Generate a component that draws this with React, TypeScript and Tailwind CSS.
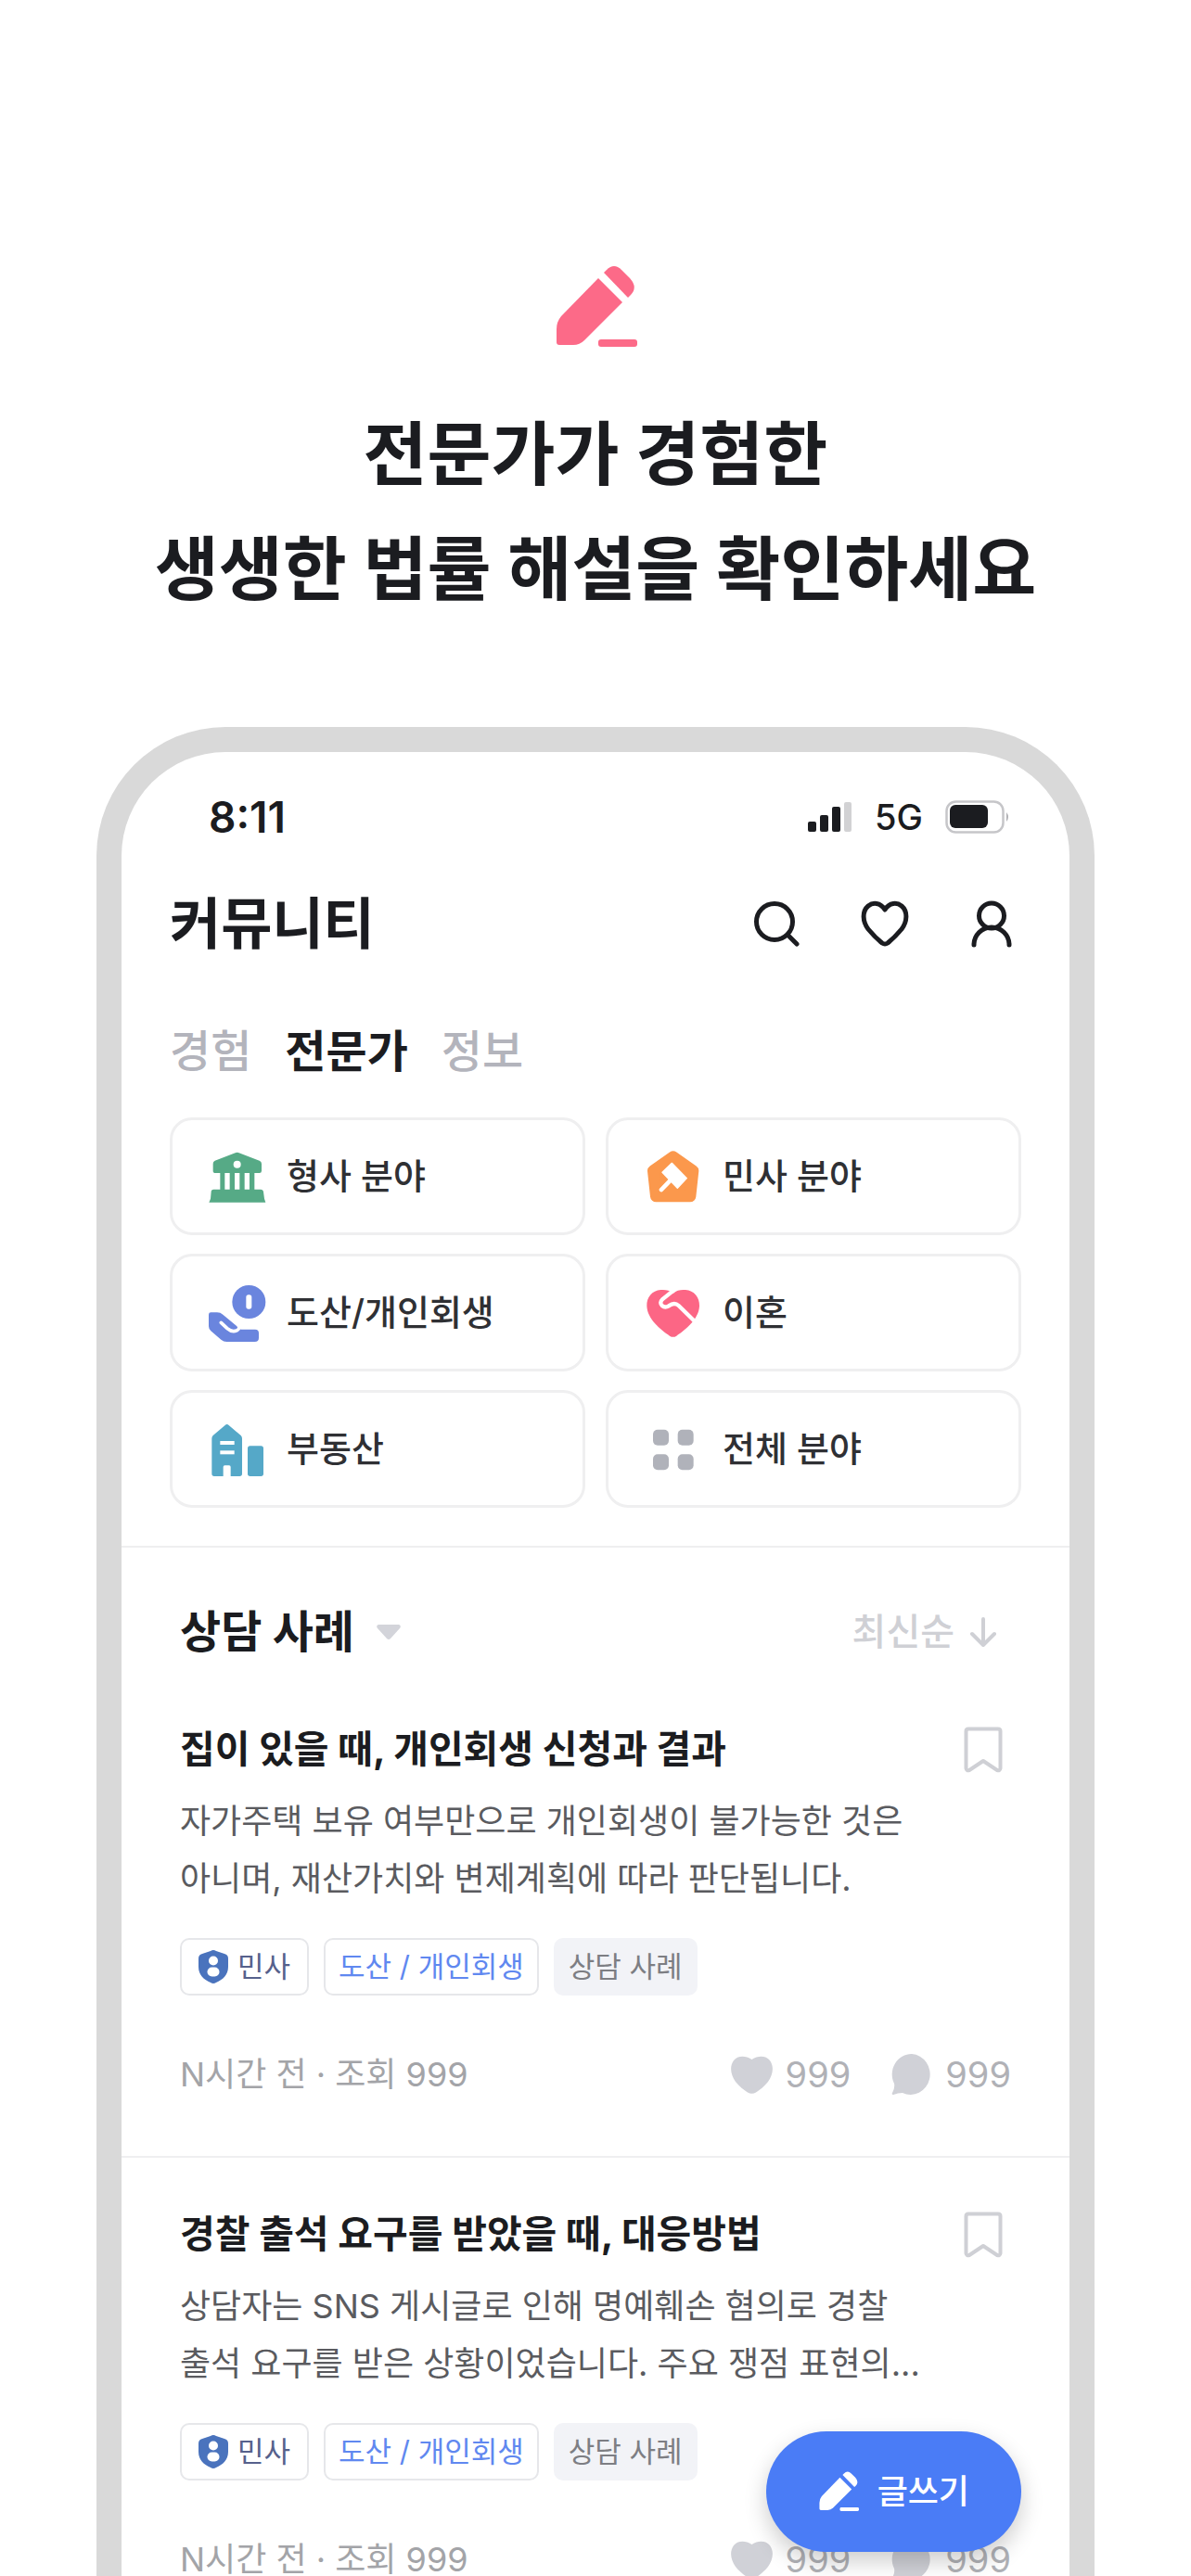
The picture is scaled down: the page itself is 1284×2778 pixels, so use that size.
import * as React from "react";

type IconProps = { className?: string };

interface Category {
  label: string;
  icon: React.ReactNode;
}

interface Post {
  id: number;
  title: string;
  lines: string[];
}

function PencilIcon({ className }: IconProps) {
  return (
    <svg viewBox="-2 0 90 90" fill="currentColor" className={className} aria-hidden="true">
      <path d="M46 14L72 40L31 81Q26 86 19 86H4Q1 86 1 83V69Q1 61 6 55Z" />
      <path d="M52 8L55 5Q63 -3 71 5L80 14Q89 24 81 32L78 35Z" />
      <rect x="46" y="80" width="42" height="8" rx="3" />
    </svg>
  );
}

function SearchIcon() {
  return (
    <svg viewBox="0 0 56 56" fill="none" stroke="currentColor" strokeWidth="5" strokeLinecap="round" className="size-14" aria-hidden="true">
      <circle cx="24" cy="26" r="19.5" />
      <path d="M38 40L48 50" />
    </svg>
  );
}

function HeartIcon() {
  return (
    <svg viewBox="0 0 56 56" fill="none" stroke="currentColor" strokeWidth="5" strokeLinejoin="round" className="size-14" aria-hidden="true">
      <path d="M28 13C33 5 41 5 46 9C53 15 52 26 46 34C41 40 36 45 31 49Q28 51 25 49C20 45 15 40 10 34C4 26 3 15 10 9C15 5 23 5 28 13Z" />
    </svg>
  );
}

function UserIcon() {
  return (
    <svg viewBox="0 0 56 56" fill="none" stroke="currentColor" strokeWidth="5" strokeLinecap="round" className="size-14" aria-hidden="true">
      <circle cx="28" cy="19.5" r="13.5" />
      <path d="M9 51A19 19 0 0 1 47 51" />
    </svg>
  );
}

function CategoryIcon({ color, children }: { color: string; children: React.ReactNode }) {
  return (
    <svg viewBox="0 0 186 186" fill={color} className="size-[62px] shrink-0" aria-hidden="true">
      {children}
    </svg>
  );
}

const categories: Category[] = [
  {
    label: "형사 분야",
    icon: (
      <CategoryIcon color="#56aa86">
        <path d="M86 16Q92 13 98 16L164 41Q171 44 171 51V74Q171 81 164 81H22Q14 81 14 74V51Q14 44 20 41Z" />
        <path d="M37 80H52V138H37ZM68 80H84V138H68ZM100 80H116V138H100ZM132 80H148V138H132Z" />
        <path d="M16 134H168Q176 134 177 142L180 164L184 176H1L6 164L8 142Q8 134 16 134Z" />
        <circle cx="92" cy="53" r="12" fill="#fff" />
      </CategoryIcon>
    ),
  },
  {
    label: "민사 분야",
    icon: (
      <CategoryIcon color="#fb984c">
        <path d="M92 29L156 74L147 156H37L28 74Z" stroke="#fb984c" strokeWidth="38" strokeLinejoin="round" />
        <path d="M88 49L136 98L106 130L57 79Z" fill="#fff" stroke="#fff" strokeWidth="4" strokeLinejoin="round" />
        <path d="M84 104L54 135" stroke="#fff" strokeWidth="14" strokeLinecap="round" />
      </CategoryIcon>
    ),
  },
  {
    label: "도산/개인회생",
    icon: (
      <CategoryIcon color="#6a85de">
        <circle cx="130" cy="57" r="54" />
        <rect x="121" y="34" width="18" height="46" rx="8" fill="#fff" />
        <path d="M0 98Q0 91 7 91H27Q38 91 46 98L84 130L104 146H150Q162 146 162 158V173Q162 186 149 186H58Q48 186 40 179L7 151Q0 145 0 136Z" />
        <path d="M40 124L60 143Q76 157 92 149Q104 142 94 126" fill="none" stroke="#fff" strokeWidth="11" strokeLinecap="round" />
      </CategoryIcon>
    ),
  },
  {
    label: "이혼",
    icon: (
      <CategoryIcon color="#fc6685">
        <path d="M92 30C104 18 118 17 132 18C160 20 178 42 177 70C176 112 132 148 103 167Q92 174 81 167C52 148 8 112 7 70C6 42 24 20 52 18C66 17 80 18 92 30Z" />
        <path d="M98 16L58 48Q46 60 57 70Q66 77 78 70Q96 56 110 69L162 120" fill="none" stroke="#fff" strokeWidth="13" />
      </CategoryIcon>
    ),
  },
  {
    label: "부동산",
    icon: (
      <CategoryIcon color="#55a8c8">
        <path d="M53 15Q59 9 65 15L104 48Q108 52 108 58V172Q108 180 100 180H71V150Q71 145 66 145H52Q47 145 47 150V180H18Q10 180 10 172V58Q10 52 14 48Z" />
        <rect x="126" y="82" width="51" height="98" rx="8" />
        <rect x="37" y="66" width="46" height="12" fill="#fff" />
        <rect x="37" y="97" width="46" height="12" fill="#fff" />
      </CategoryIcon>
    ),
  },
  {
    label: "전체 분야",
    icon: (
      <CategoryIcon color="#b0b2ba">
        <rect x="27" y="29" width="51" height="51" rx="15" />
        <rect x="107" y="29" width="51" height="51" rx="15" />
        <rect x="27" y="109" width="51" height="51" rx="15" />
        <rect x="107" y="109" width="51" height="51" rx="15" />
      </CategoryIcon>
    ),
  },
];

const posts: Post[] = [
  {
    id: 1,
    title: "집이 있을 때, 개인회생 신청과 결과",
    lines: ["자가주택 보유 여부만으로 개인회생이 불가능한 것은", "아니며, 재산가치와 변제계획에 따라 판단됩니다."],
  },
  {
    id: 2,
    title: "경찰 출석 요구를 받았을 때, 대응방법",
    lines: ["상담자는 SNS 게시글로 인해 명예훼손 혐의로 경찰", "출석 요구를 받은 상황이었습니다. 주요 쟁점 표현의..."],
  },
];

const tabs = ["경험", "전문가", "정보"];

function StatusBar() {
  return (
    <div className="flex h-[140px] items-center justify-between pr-16 pl-[94px]">
      <span className="text-[46px] font-semibold">8:11</span>
      <div className="flex items-center gap-6">
        <svg viewBox="0 0 48 34" className="h-[34px] w-12" aria-hidden="true">
          <rect x="0" y="22" width="9" height="11" rx="2" fill="#1b1c20" />
          <rect x="13" y="15" width="9" height="18" rx="2" fill="#1b1c20" />
          <rect x="26" y="6" width="9" height="27" rx="2" fill="#1b1c20" />
          <rect x="39" y="1" width="8" height="32" rx="2" fill="#d2d2d4" />
        </svg>
        <span className="text-[38px] font-medium">5G</span>
        <svg viewBox="0 0 70 36" className="h-9 w-[70px]" aria-hidden="true">
          <rect x="1.5" y="1.5" width="61" height="33" rx="10" fill="none" stroke="#c6c6c9" strokeWidth="2.5" />
          <rect x="5" y="5" width="41" height="25" rx="6" fill="#1b1c20" />
          <path d="M66 13Q70 18 66 23Z" fill="#b0b0b4" />
        </svg>
      </div>
    </div>
  );
}

function PostCard({ post }: { post: Post }) {
  return (
    <article className="px-[63px] pb-16">
      <div className="flex h-[52px] items-center justify-between">
        <h3 className="text-[41px] font-bold">{post.title}</h3>
        <button type="button" aria-label="북마크" className="flex w-[60px] justify-center text-[#cfd0d5]">
          <svg viewBox="0 0 42 50" fill="none" stroke="currentColor" strokeWidth="4" strokeLinejoin="round" className="h-[50px] w-[42px]" aria-hidden="true">
            <path d="M5 2.5H37Q39.5 2.5 39.5 5V45Q39 48 36 47L21 37L6 47Q3 48 2.5 45V5Q2.5 2.5 5 2.5Z" />
          </svg>
        </button>
      </div>
      <p className="mt-5 text-4xl leading-[62px] text-[#5a5b5f]">
        {post.lines.map((line) => (
          <span key={line} className="block">
            {line}
          </span>
        ))}
      </p>
      <div className="mt-[33px] flex h-[62px] gap-4 text-[31px]">
        <span className="flex items-center gap-2.5 rounded-[10px] border-2 border-[#e6e7ea] px-[18px] text-[#56618c]">
          <svg viewBox="0 0 32 36" className="h-9 w-8" aria-hidden="true">
            <path d="M13 1Q16 -1 19 1L28 4Q32 5 32 9V18C32 27 26 32 19 35Q16 37 13 35C6 32 0 27 0 18V9Q0 5 4 4Z" fill="#4a73bd" />
            <circle cx="16" cy="11.5" r="5" fill="#fff" />
            <rect x="9.5" y="18.5" width="13" height="10" rx="5" fill="#fff" />
          </svg>
          민사
        </span>
        <span className="flex items-center rounded-[10px] border-2 border-[#e6e7ea] px-3.5 text-[#6088f0]">도산 / 개인회생</span>
        <span className="flex items-center rounded-[10px] bg-[#f2f3f7] px-4 text-[#7d7e83]">상담 사례</span>
      </div>
      <div className="mt-[61px] flex h-12 items-center justify-between text-4xl text-[#a3a4a8]">
        <span>N시간 전 · 조회 999</span>
        <div className="flex items-center gap-11 text-[38px] text-[#b0b1b6]">
          <span className="flex items-center gap-3.5">
            <svg viewBox="0 0 45 41" fill="#d0d1d7" className="h-[41px] w-[45px]" aria-hidden="true">
              <path d="M22.5 4C30 -1 38 0 42 5C47 12 45 21 40 28C36 33 31 37 27 39.5Q22.5 42 18 39.5C14 37 9 33 5 28C0 21 -2 12 3 5C7 0 15 -1 22.5 4Z" />
            </svg>
            999
          </span>
          <span className="flex items-center gap-3.5">
            <svg viewBox="0 0 44 44" fill="#d0d1d7" className="size-11" aria-hidden="true">
              <path d="M22 0A21 22 0 1 1 12 42Q7 42 2 44Q0 44 1 42Q4 36 3 32A21 22 0 0 1 22 0Z" />
            </svg>
            999
          </span>
        </div>
      </div>
    </article>
  );
}

export default function App() {
  const [activeTab, setActiveTab] = React.useState("전문가");

  return (
    <main className="flex h-screen flex-col overflow-hidden bg-white font-['Inter','Noto_Sans_CJK_KR',sans-serif] text-[#1b1c20]">
      <header className="flex flex-col items-center pt-[286px] text-center">
        <PencilIcon className="size-[90px] text-[#fc6a88]" />
        <h1 className="mt-[52px] text-[75px] leading-[124px] font-bold">
          전문가가 경험한
          <br />
          생생한 법률 해설을 확인하세요
        </h1>
      </header>

      <div className="relative mx-[104px] mt-[108px] min-h-0 flex-1 overflow-hidden rounded-t-[139px] border-[27px] border-b-0 border-[#d9d9d9]">
        <StatusBar />

        <div className="flex h-[90px] items-center justify-between pr-14 pl-[52px]">
          <h2 className="text-[60px] font-bold">커뮤니티</h2>
          <nav className="flex gap-[59px]">
            <button type="button" aria-label="검색">
              <SearchIcon />
            </button>
            <button type="button" aria-label="관심">
              <HeartIcon />
            </button>
            <button type="button" aria-label="내 정보">
              <UserIcon />
            </button>
          </nav>
        </div>

        <div role="tablist" className="mt-[63px] flex h-[60px] items-center gap-9 px-[52px] text-5xl">
          {tabs.map((tab) => (
            <button
              key={tab}
              type="button"
              role="tab"
              aria-selected={tab === activeTab}
              onClick={() => setActiveTab(tab)}
              className={tab === activeTab ? "font-bold" : "font-medium text-[#b3b4bc]"}
            >
              {tab}
            </button>
          ))}
        </div>

        <div className="mt-[41px] grid grid-cols-2 gap-x-[22px] gap-y-5 px-[52px]">
          {categories.map((category) => (
            <button
              key={category.label}
              type="button"
              className="flex h-[127px] items-center gap-[22px] rounded-3xl border-[3px] border-[#efeff0] pl-[39px] text-[38px] font-medium text-[#2f3034]"
            >
              {category.icon}
              {category.label}
            </button>
          ))}
        </div>

        <section className="mt-[41px] border-t-2 border-[#efeff0]">
          <div className="mt-[61px] mb-[71px] flex h-[60px] items-center justify-between pr-[78px] pl-[63px]">
            <button type="button" aria-haspopup="listbox" className="flex items-center gap-6 text-5xl font-bold">
              상담 사례
              <svg viewBox="0 0 26 17" fill="#d3d4da" className="h-[17px] w-[26px]" aria-hidden="true">
                <path d="M2 0H24Q27 1 25 4L15 15Q13 17 11 15L1 4Q-1 1 2 0Z" />
              </svg>
            </button>
            <button type="button" className="flex items-center gap-4 text-[40px] font-medium text-[#cfd0d5]">
              최신순
              <svg viewBox="0 0 30 32" fill="none" stroke="currentColor" strokeWidth="4" strokeLinecap="round" strokeLinejoin="round" className="h-8 w-[30px]" aria-hidden="true">
                <path d="M15 2V29M3 18L15 30L27 18" />
              </svg>
            </button>
          </div>

          {posts.map((post, index) => (
            <React.Fragment key={post.id}>
              {index > 0 && <hr className="mb-[57px] border-t-2 border-[#efeff0]" />}
              <PostCard post={post} />
            </React.Fragment>
          ))}
        </section>

        <button
          type="button"
          className="absolute right-[52px] bottom-[26px] flex h-[130px] items-center gap-5 rounded-full bg-[#4a7cf6] px-14 text-4xl font-medium text-white shadow-[0_10px_24px_rgba(0,0,0,0.2)]"
        >
          <PencilIcon className="size-11" />
          글쓰기
        </button>
      </div>
    </main>
  );
}
